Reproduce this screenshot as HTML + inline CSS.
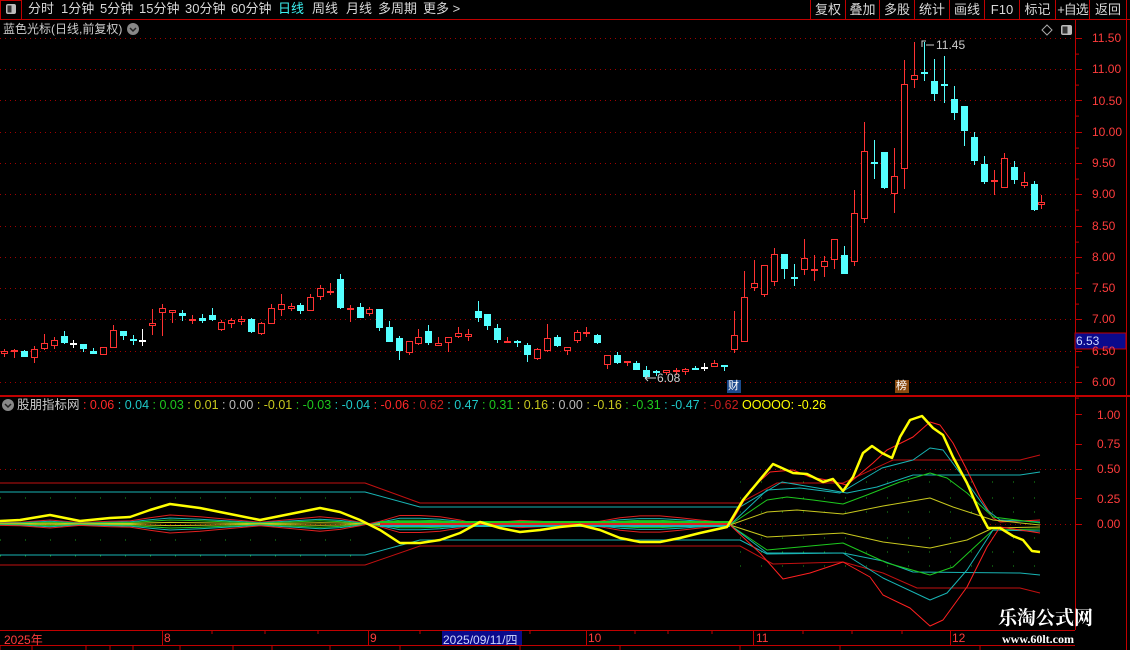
<!DOCTYPE html>
<html><head><meta charset="utf-8"><style>
html,body{margin:0;padding:0;background:#000;width:1130px;height:650px;overflow:hidden;font-family:"Liberation Sans","Noto Sans CJK SC",sans-serif;}
.t{position:absolute;white-space:nowrap;font-size:12px;line-height:14px;}
.tab{color:#d8d8d8;}
.btn{position:absolute;top:0;height:19px;border-left:1px solid #c00000;color:#d8d8d8;font-size:13px;line-height:19px;text-align:center;white-space:nowrap;overflow:visible;}
.ax{position:absolute;color:#ff3c3c;font-size:12px;left:1092px;}
.tl{position:absolute;top:631px;color:#ff3c3c;font-size:12px;}
</style></head><body>
<svg width="1130" height="650" style="position:absolute;left:0;top:0" id="sv">
<line x1="0" y1="19.5" x2="1130" y2="19.5" stroke="#c00000"/>
<rect x="0.5" y="0.5" width="21" height="19" fill="none" stroke="#c00000"/>
<rect x="6" y="4" width="10" height="10" rx="2" fill="#bbb"/><rect x="7.5" y="5.5" width="4" height="7" fill="#333"/>
<line x1="1075.5" y1="20" x2="1075.5" y2="630" stroke="#c00000"/>
<line x1="1126.5" y1="20" x2="1126.5" y2="650" stroke="#c00000"/>
<line x1="0" y1="396" x2="1130" y2="396" stroke="#c00000" stroke-width="2"/>
<line x1="0" y1="630.5" x2="1075" y2="630.5" stroke="#c00000"/>
<line x1="0" y1="645.5" x2="1075" y2="645.5" stroke="#c00000"/>
<g stroke="#c00000">
<line x1="162.5" y1="631" x2="162.5" y2="645"/><line x1="368.5" y1="631" x2="368.5" y2="645"/><line x1="586.5" y1="631" x2="586.5" y2="645"/><line x1="753.5" y1="631" x2="753.5" y2="645"/><line x1="950.5" y1="631" x2="950.5" y2="645"/>
<line x1="212" y1="631" x2="212" y2="634"/><line x1="265" y1="631" x2="265" y2="634"/><line x1="318" y1="631" x2="318" y2="634"/><line x1="420" y1="631" x2="420" y2="634"/><line x1="530" y1="631" x2="530" y2="634"/><line x1="635" y1="631" x2="635" y2="634"/><line x1="668" y1="631" x2="668" y2="634"/><line x1="712" y1="631" x2="712" y2="634"/><line x1="803" y1="631" x2="803" y2="634"/><line x1="852" y1="631" x2="852" y2="634"/><line x1="902" y1="631" x2="902" y2="634"/>
</g>
<g stroke="#c00000" stroke-width="1">
<line x1="0" y1="646" x2="0" y2="650"/><line x1="32" y1="646" x2="32" y2="650"/><line x1="86" y1="646" x2="86" y2="650"/><line x1="110" y1="646" x2="110" y2="650"/><line x1="133" y1="646" x2="133" y2="650"/><line x1="180" y1="646" x2="180" y2="650"/><line x1="233" y1="646" x2="233" y2="650"/><line x1="272" y1="646" x2="272" y2="650"/><line x1="330" y1="646" x2="330" y2="650"/><line x1="400" y1="646" x2="400" y2="650"/><line x1="520" y1="646" x2="520" y2="650"/><line x1="620" y1="646" x2="620" y2="650"/><line x1="740" y1="646" x2="740" y2="650"/><line x1="840" y1="646" x2="840" y2="650"/><line x1="980" y1="646" x2="980" y2="650"/>
</g>
<g id="grid" stroke="#a00000" stroke-dasharray="1,4"></g>
<g id="ind" fill="none" stroke-width="1"></g>
<g id="cand"></g>
<g id="ticks" stroke="#c00000"></g>
<path d="M1047 25 L1052 30 L1047 35 L1042 30 Z" fill="none" stroke="#aaa"/>
<rect x="1061" y="25" width="11" height="10" rx="2" fill="#bbb"/><rect x="1062.5" y="26.5" width="5" height="7" fill="#333"/>
<circle cx="133" cy="29" r="6" fill="#888"/><path d="M130 28 L133 31 L136 28" stroke="#222" fill="none" stroke-width="1.5"/>
<circle cx="8" cy="405" r="6" fill="#888"/><path d="M5 404 L8 407 L11 404" stroke="#222" fill="none" stroke-width="1.5"/>
<rect x="727" y="380" width="14" height="13" fill="#1c4a8c"/>
<rect x="895" y="380" width="14" height="13" fill="#8a4a10"/>
<rect x="1075" y="333" width="51" height="16" fill="#0a0a8c" stroke="#c00000"/>
<rect x="442" y="631" width="80" height="14" fill="#0a0a8c"/>
<path d="M656 378 L645 378 M645 378 L648 375 M645 378 L648 381" stroke="#ccc" fill="none"/>
<path d="M922 47 L922 41 L926 41 M926 45 L934 45" stroke="#ccc" fill="none"/>
</svg>

<div class="t tab" style="left:28px;top:2px;font-size:13px">分时</div>
<div class="t tab" style="left:61px;top:2px;font-size:13px">1分钟</div>
<div class="t tab" style="left:100px;top:2px;font-size:13px">5分钟</div>
<div class="t tab" style="left:139px;top:2px;font-size:13px">15分钟</div>
<div class="t tab" style="left:185px;top:2px;font-size:13px">30分钟</div>
<div class="t tab" style="left:231px;top:2px;font-size:13px">60分钟</div>
<div class="t" style="left:278px;top:2px;font-size:13px;color:#3cf0f0">日线</div>
<div class="t tab" style="left:312px;top:2px;font-size:13px">周线</div>
<div class="t tab" style="left:346px;top:2px;font-size:13px">月线</div>
<div class="t tab" style="left:378px;top:2px;font-size:13px">多周期</div>
<div class="t tab" style="left:423px;top:2px;font-size:13px">更多 &gt;</div>
<div class="btn" style="left:810px;width:34px">复权</div>
<div class="btn" style="left:845px;width:33px">叠加</div>
<div class="btn" style="left:879px;width:34px">多股</div>
<div class="btn" style="left:914px;width:34px">统计</div>
<div class="btn" style="left:949px;width:34px">画线</div>
<div class="btn" style="left:984px;width:34px">F10</div>
<div class="btn" style="left:1019px;width:35px">标记</div>
<div class="btn" style="left:1055px;width:33px;letter-spacing:-1px">+自选</div>
<div class="btn" style="left:1089px;width:36px;border-right:1px solid #c00000">返回</div>

<div class="t" style="left:3px;top:22px;color:#ccc;font-size:12px">蓝色光标(日线,前复权)</div>
<div class="t" style="left:936px;top:38px;color:#ccc;font-size:12px">11.45</div>
<div class="t" style="left:657px;top:371px;color:#ccc;font-size:12px">6.08</div>
<div class="t" style="left:728px;top:379px;color:#fff;font-size:11px">财</div>
<div class="t" style="left:896px;top:379px;color:#fff;font-size:11px">榜</div>

<div class="ax" style="top:31px">11.50</div>
<div class="ax" style="top:62px">11.00</div>
<div class="ax" style="top:94px">10.50</div>
<div class="ax" style="top:125px">10.00</div>
<div class="ax" style="top:156px">9.50</div>
<div class="ax" style="top:187px">9.00</div>
<div class="ax" style="top:219px">8.50</div>
<div class="ax" style="top:250px">8.00</div>
<div class="ax" style="top:281px">7.50</div>
<div class="ax" style="top:312px">7.00</div>
<div class="ax" style="top:344px">6.50</div>
<div class="ax" style="top:375px">6.00</div>
<div class="t" style="left:1076px;top:334px;color:#cfd8ff;font-size:12px">6.53</div>
<div class="ax" style="top:408px;left:1097px">1.00</div>
<div class="ax" style="top:437px;left:1097px">0.75</div>
<div class="ax" style="top:462px;left:1097px">0.50</div>
<div class="ax" style="top:492px;left:1097px">0.25</div>
<div class="ax" style="top:517px;left:1097px">0.00</div>

<div class="t" style="left:17px;top:398px;font-size:12.5px;color:#ccc">股朋指标网 <span style="color:#ff2828">: 0.06</span> <span style="color:#1ec8c8">: 0.04</span> <span style="color:#1ec81e">: 0.03</span> <span style="color:#c8c81e">: 0.01</span> <span style="color:#bbb">: 0.00</span> <span style="color:#c8c81e">: -0.01</span> <span style="color:#1ec81e">: -0.03</span> <span style="color:#1ec8c8">: -0.04</span> <span style="color:#ff2828">: -0.06</span> <span style="color:#c81e1e">: 0.62</span> <span style="color:#1ec8c8">: 0.47</span> <span style="color:#1ec81e">: 0.31</span> <span style="color:#c8c81e">: 0.16</span> <span style="color:#bbb">: 0.00</span> <span style="color:#c8c81e">: -0.16</span> <span style="color:#1ec81e">: -0.31</span> <span style="color:#1ec8c8">: -0.47</span> <span style="color:#c81e1e">: -0.62</span> <span style="color:#ffff00">OOOOO: -0.26</span></div>

<div class="tl" style="left:4px">2025年</div>
<div class="tl" style="left:164px">8</div>
<div class="tl" style="left:370px">9</div>
<div class="tl" style="left:443px;color:#cfd8ff">2025/09/11/四</div>
<div class="tl" style="left:588px">10</div>
<div class="tl" style="left:756px">11</div>
<div class="tl" style="left:952px">12</div>

<div class="t" style="left:998px;top:606px;color:#fff;font-size:19px;font-weight:bold;line-height:22px;font-family:'Noto Serif CJK SC','Noto Sans CJK SC',serif">乐淘公式网</div>
<div class="t" style="left:1002px;top:632px;color:#fff;font-size:12px;font-weight:bold;font-family:'Liberation Serif',serif">www.60lt.com</div>

<script>
var NS="http://www.w3.org/2000/svg";
function el(p,n,a){var e=document.createElementNS(NS,n);for(var k in a)e.setAttribute(k,a[k]);p.appendChild(e);return e;}
var grid=document.getElementById('grid');
for(var i=0;i<12;i++){var y=Math.round(37.7+i*31.3)+0.5;el(grid,'line',{x1:0,y1:y,x2:1073,y2:y});}
[469.5,524.5].forEach(function(y){el(grid,'line',{x1:0,y1:y,x2:1073,y2:y});});
var tk=document.getElementById('ticks');
for(var i=0;i<12;i++){var y=Math.round(37.7+i*31.3)+0.5;el(tk,'line',{x1:1075,y1:y,x2:1082,y2:y});el(tk,'line',{x1:1075,y1:y+15.6,x2:1079,y2:y+15.6});}
[414,444,469,498,524].forEach(function(y){el(tk,'line',{x1:1075,y1:y+.5,x2:1082,y2:y+.5});});
var gd=document.getElementById('ind');
[482,498,512,538,552,566].forEach(function(y){el(gd,'line',{x1:740,y1:y,x2:1045,y2:y,stroke:'#1a9a1a','stroke-dasharray':'1,20'});});
[498,540,556].forEach(function(y){el(gd,'line',{x1:0,y1:y,x2:360,y2:y,stroke:'#1a9a1a','stroke-dasharray':'1,24'});});
var A=[[351,354,349,357,'r'],[350,352,349,358,'r'],[351,357,350,357,'c'],[349,358,346,363,'r'],[343,349,334,350,'r'],[340,346,337,349,'r'],[336,343,331,344,'c'],[343,343,340,348,'w'],[344,349,344,352,'c'],[351,354,348,354,'c'],[347,355,347,355,'r'],[330,348,325,348,'r'],[331,336,331,340,'c'],[339,339,335,345,'c'],[340,340,329,346,'w'],[323,326,309,335,'r'],[308,313,304,336,'r'],[310,313,310,323,'r'],[313,316,310,321,'c'],[319,319,315,324,'r'],[318,321,314,323,'c'],[315,320,308,321,'c'],[322,330,320,331,'r'],[320,324,318,328,'r'],[319,322,316,325,'r'],[319,332,318,333,'c'],[323,334,322,335,'r'],[308,324,304,324,'r'],[304,310,294,316,'r'],[306,309,303,311,'r'],[305,311,303,314,'c'],[297,311,294,311,'r'],[288,297,285,300,'r'],[291,292,283,295,'r'],[279,308,274,309,'c'],[308,308,305,322,'r'],[307,318,303,318,'c'],[309,314,307,316,'r']];
var C=[];A.forEach(function(a,k){C.push([4.3+9.87*k].concat(a));});
var B=[[379,309,328,309,331,'c'],[389,327,342,321,342,'c'],[399,338,351,336,360,'c'],[409,341,353,341,355,'r'],[418,337,344,329,345,'r'],[428,331,343,325,345,'c'],[438,343,346,337,346,'r'],[448,337,343,337,352,'r'],[458,333,337,327,338,'r'],[468,334,337,329,341,'r'],[478,311,318,301,322,'c'],[487,314,326,314,330,'c'],[497,328,340,324,343,'c'],[507,341,341,337,343,'r'],[517,341,341,340,347,'c'],[527,345,355,343,362,'c'],[537,349,359,348,360,'r'],[547,338,351,324,352,'r'],[557,337,346,335,347,'c'],[567,347,351,347,355,'r'],[577,332,341,330,343,'r'],[586,332,332,327,337,'r'],[597,335,343,334,344,'c'],[607,355,365,355,369,'r'],[617,355,363,352,364,'c'],[627,361,363,361,366,'r'],[636,363,370,361,370,'c'],[646,370,377,366,378,'c'],[656,371,371,370,376,'c'],[666,370,373,370,375,'r'],[676,370,372,368,375,'r'],[685,369,372,368,375,'r'],[695,368,368,366,370,'c'],[704,367,367,363,371,'w'],[714,363,367,360,367,'r'],[724,365,367,365,371,'c'],
[734,335,350,311,353,'r'],[744,297,342,271,342,'r'],[754,283,288,260,291,'r'],[764,265,295,265,297,'r'],[774,254,282,248,286,'r'],[784,254,269,254,279,'c'],[794,277,277,264,286,'c'],[804,258,270,239,275,'r'],[814,269,269,255,281,'r'],[824,261,267,256,277,'r'],[834,239,260,239,269,'r'],[844,255,274,246,274,'c'],[854,213,262,190,266,'r'],[864,151,219,122,223,'r'],[874,162,162,140,179,'c'],[884,152,188,152,189,'c'],[894,176,194,148,213,'r'],[904,84,169,60,189,'r'],[914,75,80,42,88,'r'],[924,72,72,42,81,'c'],[934,81,94,59,101,'c'],[944,84,84,56,103,'c'],[954,99,113,86,120,'c'],[964,106,131,106,146,'c'],[974,137,161,132,165,'c'],[984,164,182,156,184,'c'],[994,180,180,170,195,'r'],[1004,158,188,153,188,'r'],[1014,167,180,161,184,'c'],[1024,182,186,172,188,'r'],[1034,184,210,181,211,'c'],[1041,202,205,195,209,'r']];
C=C.concat(B);
var cg=document.getElementById('cand');
var col={r:'#ff3232',c:'#54ffff',w:'#ffffff'};
C.forEach(function(c){var x=Math.round(c[0]),t=c[1],b=c[2],h=c[3],l=c[4],ty=c[5],s=col[ty];
 el(cg,'line',{x1:x+.5,y1:h,x2:x+.5,y2:t,stroke:s});el(cg,'line',{x1:x+.5,y1:b,x2:x+.5,y2:l,stroke:s});
 if(b-t<2){el(cg,'rect',{x:x-3,y:t,width:7,height:2,fill:s});}
 else if(ty=='r'){el(cg,'rect',{x:x-2.5,y:t+.5,width:6,height:b-t-1,fill:'#000',stroke:s});}
 else{el(cg,'rect',{x:x-3,y:t,width:7,height:b-t,fill:s});}
});
function P(pts,stroke,w){var d='M'+pts.map(function(p){return p[0]+' '+p[1];}).join(' L');el(gd,'path',{d:d,stroke:stroke,'stroke-width':w||1,'stroke-linejoin':'round'});}
var Y=[[0,521],[20,520],[50,515],[80,521],[110,518],[130,517],[150,510],[170,504],[200,508],[230,514],[260,520],[290,514],[320,508],[340,512],[360,520],[380,530],[400,543],[420,543],[440,540],[460,533],[480,522],[500,528],[520,532],[540,530],[560,527],[580,525],[600,530],[620,538],[640,542],[660,542],[680,538],[700,533],[727,527],[743,500],[773,464],[793,473],[807,474],[823,482],[833,479],[843,491],[853,477],[863,453],[872,446],[882,453],[892,458],[900,437],[910,420],[922,416],[933,428],[943,435],[953,457],[967,483],[980,513],[988,528],[1000,528],[1013,536],[1023,540],[1032,551],[1040,552]];
P([[0,483],[365,483],[420,503],[740,503],[777,483],[843,483],[893,460],[1020,460],[1040,455]],'#c01010');
P([[0,492],[365,492],[420,507],[740,507],[782,482],[847,493],[877,487],[913,475],[1020,475],[1040,472]],'#18b4b4');
P([[0,555],[365,555],[420,540],[740,540],[767,554],[843,553],[883,561],[913,572],[1020,573],[1040,575]],'#18b4b4');
P([[0,565],[365,565],[420,546],[740,546],[773,564],[843,562],[883,573],[917,588],[1020,588],[1040,593]],'#c01010');
function wig(f,c){var pts=[];for(var i=0;i<Y.length;i++){if(Y[i][0]>730)break;pts.push([Y[i][0],524+(Y[i][1]-524)*f]);}pts.push([730,524]);P(pts,c);}
wig(0.45,'#e02020');wig(0.3,'#18b4b4');wig(0.2,'#1ec81e');wig(0.08,'#c8c81e');wig(-0.08,'#c8c81e');wig(-0.2,'#1ec81e');wig(-0.3,'#18b4b4');wig(-0.45,'#e02020');
P([[380,522],[730,522]],'#1ec81e',2);P([[380,524],[730,524]],'#e02020',2);P([[380,526],[730,526]],'#18b4b4',2);
P([[730,525],[750,490],[770,472],[793,470],[810,477],[827,480],[847,485],[873,463],[887,450],[903,442],[913,437],[930,422],[940,425],[953,443],[967,470],[980,497],[993,518],[1000,522],[1040,520]],'#ff2020');
P([[730,525],[767,490],[800,488],[840,493],[882,468],[913,460],[930,448],[943,450],[963,477],[987,510],[1000,520],[1040,522]],'#18b4b4');
P([[730,525],[767,500],[787,497],[813,500],[843,504],[867,495],[900,482],[930,473],[947,478],[967,493],[993,517],[1040,523]],'#1ec81e');
P([[730,525],[767,512],[797,510],[843,514],[883,506],[930,498],[953,507],[993,520],[1040,525]],'#c8c81e');
P([[730,525],[767,537],[843,533],[883,542],[930,548],[967,540],[993,528],[1040,527]],'#c8c81e');
P([[730,525],[767,550],[843,543],[887,563],[930,575],[953,567],[993,530],[1040,529]],'#1ec81e');
P([[730,525],[767,553],[843,553],[883,578],[930,600],[947,593],[967,570],[993,530],[1040,531]],'#18b4b4');
P([[730,525],[760,553],[783,579],[810,573],[843,562],[870,577],[883,595],[910,608],[930,626],[943,620],[967,587],[987,547],[1000,527],[1040,533]],'#ff2020');
P(Y,'#ffff00',2.5);
</script>
</body></html>
